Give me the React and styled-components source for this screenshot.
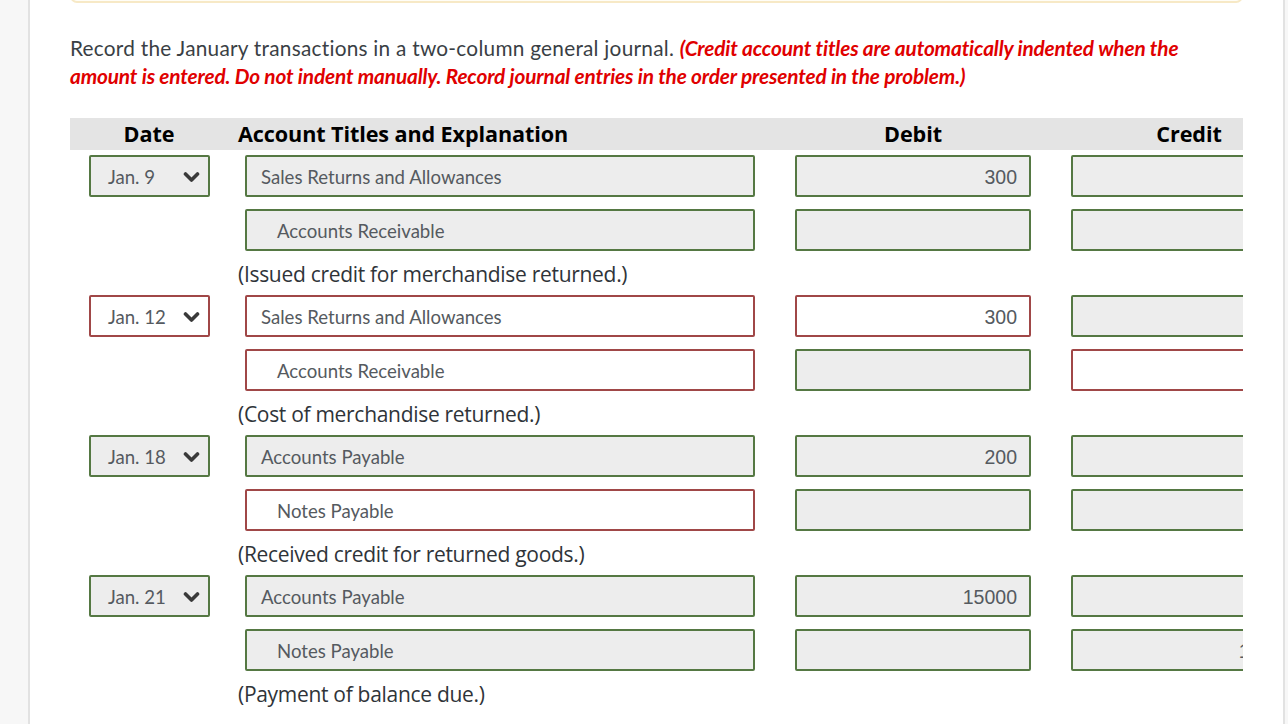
import React from "react";
import styled, { createGlobalStyle } from "styled-components";

const Global = createGlobalStyle`
  html, body { margin: 0; padding: 0; background: #fff; }
  body { font-family: Lato, "Open Sans", sans-serif; overflow: hidden; }
`;

const Page = styled.div`
  display: flex;
  width: 1288px;
  height: 724px;
  overflow: hidden;
`;

const Gutter = styled.div`
  flex: 0 0 ${(p) => p.$w}px;
  background: #f7f7f7;
  border-${(p) => p.$side}: 2px solid #e2e2e2;
`;

const Main = styled.main`
  flex: 1;
  min-width: 0;
  padding: 0 40px;
  overflow: hidden;
`;

const Notice = styled.div`
  margin-top: -40px;
  height: 39px;
  border: 2px solid #f7e9c6;
  border-radius: 7px;
  background: #fffdf6;
`;

const Instructions = styled.p`
  margin: 31px 0 28px;
  font-family: Lato, sans-serif;
  font-size: 20.8px;
  line-height: 28px;
  color: #3a3f45;
  letter-spacing: 0.25px;
  white-space: nowrap;
`;

const Hint = styled.strong`
  color: #e00000;
  font-style: italic;
  font-weight: 700;
  letter-spacing: -0.15px;
`;

const Table = styled.div`
  width: 1173px;
  overflow: hidden;
`;

const Grid = styled.div`
  display: grid;
  grid-template-columns: 158px 527px 276px 276px;
  width: 1237px;
`;

const HeaderRow = styled(Grid)`
  height: 32px;
  background: #e4e4e4;
  align-items: center;
  font-family: "Open Sans", sans-serif;
  font-weight: 700;
  font-size: 21.6px;
  color: #000;
  margin-bottom: 5px;
`;

const HeadCell = styled.div`
  text-align: ${(p) => p.$align || "center"};
  padding-left: ${(p) => p.$pl || 0}px;
  line-height: 32px;
  letter-spacing: -0.1px;
`;

const Line = styled(Grid)`
  height: 42px;
  margin-bottom: ${(p) => p.$mb || 0}px;
`;

const Cell = styled.div`
  padding-left: ${(p) => p.$pl || 0}px;
  display: flex;
`;

const Field = styled.div`
  box-sizing: border-box;
  height: 42px;
  width: ${(p) => (p.$w ? `${p.$w}px` : "100%")};
  border: 2px solid ${(p) => (p.$bad ? "#a04747" : "#557843")};
  border-radius: 2px;
  background: ${(p) => (p.$bad ? "#ffffff" : "#ededed")};
  display: flex;
  align-items: center;
  color: #555a60;
  white-space: nowrap;
  overflow: hidden;
`;

const AccountField = styled(Field)`
  padding-left: ${(p) => (p.$indent ? 30 : 14)}px;
  font-family: Lato, sans-serif;
  font-size: 18.6px;
  padding-top: 2px;
`;

const AmountField = styled(Field)`
  justify-content: flex-end;
  padding: 2px 12px 0 0;
  font-family: "Liberation Sans", Arial, sans-serif;
  font-size: 19.5px;
`;

const DateField = styled(Field)`
  margin-left: 19px;
  padding: 2px 8px 0 17px;
  justify-content: space-between;
  font-family: Lato, sans-serif;
  font-size: 18.6px;
`;

const ExplainWrap = styled.div`
  padding-left: 168px;
  height: 44px;
  box-sizing: border-box;
  padding-top: 9px;
  font-family: "Open Sans", sans-serif;
  font-size: 21px;
  line-height: 28px;
  color: #2f3439;
  letter-spacing: -0.3px;
`;

const Chevron = () => (
  <svg width="17" height="13" viewBox="0 0 17 13" aria-hidden="true">
    <path d="M2.5 3 L8.5 9 L14.5 3" fill="none" stroke="#3a3a3a" strokeWidth="3.6" strokeLinecap="round" strokeLinejoin="round" />
  </svg>
);

const entries = [
  {
    date: "Jan. 9",
    dateBad: false,
    lines: [
      { acct: "Sales Returns and Allowances", acctBad: false, debit: "300", debitBad: false, credit: "", creditBad: false },
      { acct: "Accounts Receivable", indent: true, acctBad: false, debit: "", debitBad: false, credit: "", creditBad: false },
    ],
    note: "(Issued credit for merchandise returned.)",
  },
  {
    date: "Jan. 12",
    dateBad: true,
    lines: [
      { acct: "Sales Returns and Allowances", acctBad: true, debit: "300", debitBad: true, credit: "", creditBad: false },
      { acct: "Accounts Receivable", indent: true, acctBad: true, debit: "", debitBad: false, credit: "", creditBad: true },
    ],
    note: "(Cost of merchandise returned.)",
  },
  {
    date: "Jan. 18",
    dateBad: false,
    lines: [
      { acct: "Accounts Payable", acctBad: false, debit: "200", debitBad: false, credit: "", creditBad: false },
      { acct: "Notes Payable", indent: true, acctBad: true, debit: "", debitBad: false, credit: "", creditBad: false },
    ],
    note: "(Received credit for returned goods.)",
  },
  {
    date: "Jan. 21",
    dateBad: false,
    lines: [
      { acct: "Accounts Payable", acctBad: false, debit: "15000", debitBad: false, credit: "", creditBad: false },
      { acct: "Notes Payable", indent: true, acctBad: false, debit: "", debitBad: false, credit: "15000", creditBad: false },
    ],
    note: "(Payment of balance due.)",
  },
];

export default function App() {
  return (
    <>
      <Global />
      <Page>
        <Gutter $w={28} $side="right" />
        <Main>
          <Notice />
          <Instructions>
            Record the January transactions in a two-column general journal.{" "}
            <Hint>
              (Credit account titles are automatically indented when the
              <br />
              amount is entered. Do not indent manually. Record journal entries in the order presented in the problem.)
            </Hint>
          </Instructions>
          <Table>
            <HeaderRow>
              <HeadCell>Date</HeadCell>
              <HeadCell $align="left" $pl={10}>Account Titles and Explanation</HeadCell>
              <HeadCell $pl={40}>Debit</HeadCell>
              <HeadCell $pl={40}>Credit</HeadCell>
            </HeaderRow>
            {entries.map((e) => (
              <div key={e.date}>
                {e.lines.map((l, i) => (
                  <Line key={i} $mb={i === 0 ? 12 : 0}>
                    <Cell>
                      {i === 0 && (
                        <DateField $w={121} $bad={e.dateBad}>
                          <span>{e.date}</span>
                          <Chevron />
                        </DateField>
                      )}
                    </Cell>
                    <Cell $pl={17}>
                      <AccountField $bad={l.acctBad} $indent={l.indent}>{l.acct}</AccountField>
                    </Cell>
                    <Cell $pl={40}>
                      <AmountField $bad={l.debitBad}>{l.debit}</AmountField>
                    </Cell>
                    <Cell $pl={40}>
                      <AmountField $bad={l.creditBad}>{l.credit}</AmountField>
                    </Cell>
                  </Line>
                ))}
                <ExplainWrap>{e.note}</ExplainWrap>
              </div>
            ))}
          </Table>
        </Main>
        <Gutter $w={3} $side="left" />
      </Page>
    </>
  );
}
